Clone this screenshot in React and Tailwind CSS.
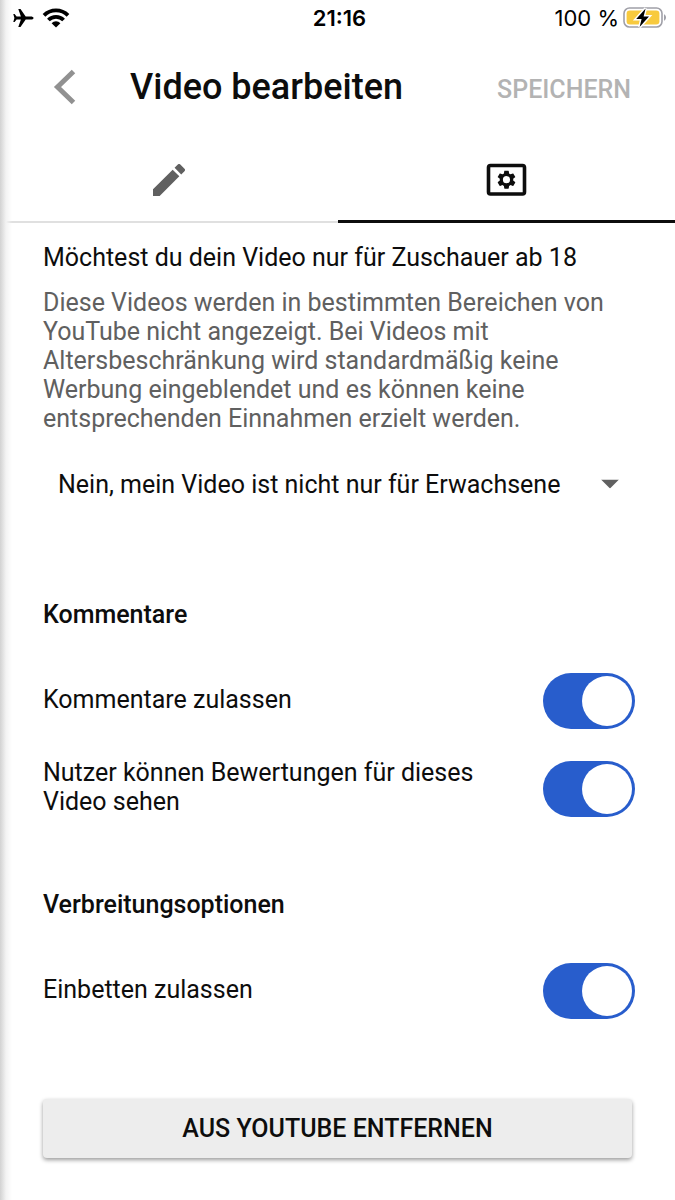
import { useState } from "react";

function StatusBar() {
  return (
    <div className="grid h-9 grid-cols-3 items-center pl-3 pr-2 font-['Inter','Liberation_Sans',sans-serif] text-[22px] leading-9 text-black">
      <div className="flex items-center gap-2">
        <svg viewBox="0 0 22 20" className="h-5 w-[22px]" fill="currentColor" aria-hidden="true">
          <path d="M21.5 10c0 1-1.2 1.5-2.8 1.5h-5L8.5 19H6.3l2.6-7.5H4.6l-2 2.6H1.3L2.4 10 1.3 5.9h1.3l2 2.6h4.3L6.3 1h2.2l5.2 7.5h5c1.6 0 2.8.5 2.8 1.5z" />
        </svg>
        <svg viewBox="0 0 28 20" className="h-5 w-7" fill="none" stroke="currentColor" strokeWidth="3.8" aria-hidden="true">
          <path d="M2 7.4a17 17 0 0 1 24 0" />
          <path d="M6.4 12a10.8 10.8 0 0 1 15.2 0" />
          <path d="M14 19.6l-4.4-4.4a6.2 6.2 0 0 1 8.8 0z" fill="currentColor" stroke="none" />
        </svg>
      </div>
      <div className="text-center font-semibold">21:16</div>
      <div className="flex items-center justify-end gap-1 whitespace-nowrap">
        <span>100 %</span>
        <svg viewBox="0 0 44 22" className="h-[22px] w-11" aria-hidden="true">
          <rect x="1" y="1" width="38" height="19" rx="5.5" fill="none" stroke="#a0a0a8" strokeWidth="1.6" />
          <rect x="3.6" y="3.6" width="32.8" height="13.8" rx="3.2" fill="#f8ca3e" />
          <path d="M41 7.2v6.6c1.2-.5 2-1.8 2-3.3s-.8-2.8-2-3.3z" fill="#a0a0a8" />
          <path d="M22.6 1.5L13.2 12h5.4l-2 8L26 9.4h-5.4z" fill="#000" stroke="#fff" strokeWidth="3" paintOrder="stroke" />
        </svg>
      </div>
    </div>
  );
}

function Header() {
  return (
    <header className="flex h-[102px] items-center pl-[43px] pr-11">
      <button type="button" aria-label="Zurück" className="flex h-12 w-[87px] items-center pl-2.5 text-[#919191]">
        <svg viewBox="0 0 24 36" className="h-9 w-6" fill="none" stroke="currentColor" strokeWidth="5" aria-hidden="true">
          <path d="M20.5 2.5L4.5 18l16 15.5" />
        </svg>
      </button>
      <h1 className="flex-1 text-4xl font-medium">Video bearbeiten</h1>
      <button type="button" disabled className="pt-1 text-[25px] font-medium text-[#b3b3b3]">
        SPEICHERN
      </button>
    </header>
  );
}

function Tabs({ active, onSelect }) {
  const tab = "flex h-[85px] items-center justify-center";
  const on = "border-b-3 border-[#0d0d0d]";
  const off = "border-b-2 border-[#e0e0e0]";
  return (
    <div role="tablist" className="grid grid-cols-2">
      <button
        type="button"
        role="tab"
        aria-label="Details"
        aria-selected={active === "details"}
        onClick={() => onSelect("details")}
        className={`${tab} ${active === "details" ? on : off} text-[#606060]`}
      >
        <svg viewBox="3 3 18 18" className="h-8 w-8" fill="currentColor" aria-hidden="true">
          <path d="M3 17.25V21h3.75L17.81 9.94l-3.75-3.75L3 17.25zM20.71 7.04a1 1 0 0 0 0-1.41l-2.34-2.34a1 1 0 0 0-1.41 0l-1.83 1.83 3.75 3.75 1.83-1.83z" />
        </svg>
      </button>
      <button
        type="button"
        role="tab"
        aria-label="Erweiterte Einstellungen"
        aria-selected={active === "advanced"}
        onClick={() => onSelect("advanced")}
        className={`${tab} ${active === "advanced" ? on : off} text-[#0d0d0d]`}
      >
        <svg viewBox="0 0 42 34" className="h-[34px] w-[42px]" aria-hidden="true">
          <rect x="3.5" y="3.5" width="36" height="28.5" rx="2" fill="none" stroke="currentColor" strokeWidth="3.6" />
          <g transform="translate(10.7 6.9) scale(.9)">
            <path
              fill="currentColor"
              fillRule="evenodd"
              d="M19.43 12.98c.04-.32.07-.64.07-.98s-.03-.66-.07-.98l2.11-1.65c.19-.15.24-.42.12-.64l-2-3.46c-.12-.22-.39-.3-.61-.22l-2.49 1c-.52-.4-1.08-.73-1.69-.98l-.38-2.65A.49.49 0 0 0 14 2h-4c-.25 0-.46.18-.49.42l-.38 2.65c-.61.25-1.17.59-1.69.98l-2.49-1c-.23-.09-.49 0-.61.22l-2 3.46c-.13.22-.07.49.12.64l2.11 1.65c-.04.32-.07.65-.07.98s.03.66.07.98l-2.11 1.65c-.19.15-.24.42-.12.64l2 3.46c.12.22.39.3.61.22l2.49-1c.52.4 1.08.73 1.69.98l.38 2.65c.03.24.24.42.49.42h4c.25 0 .46-.18.49-.42l.38-2.65c.61-.25 1.17-.59 1.69-.98l2.49 1c.23.09.49 0 .61-.22l2-3.46c.12-.22.07-.49-.12-.64l-2.11-1.65zM12 16a4 4 0 1 1 0-8 4 4 0 0 1 0 8z"
            />
          </g>
        </svg>
      </button>
    </div>
  );
}

function Toggle({ label }) {
  const [checked, setChecked] = useState(true);
  return (
    <label className="flex min-h-14 items-center justify-between">
      <span className="max-w-[460px] pb-1">{label}</span>
      <input
        type="checkbox"
        role="switch"
        checked={checked}
        onChange={(e) => setChecked(e.target.checked)}
        className="h-14 w-[92px] shrink-0 appearance-none rounded-full bg-gray-400 p-[3px] before:block before:size-[50px] before:rounded-full before:bg-white checked:bg-[#285dcc] checked:before:ml-9"
      />
    </label>
  );
}

export default function App() {
  const [tab, setTab] = useState("advanced");
  return (
    <div className="relative min-h-screen bg-white font-['Roboto',sans-serif] text-[25px] leading-[29px] text-[#0d0d0d]">
      <div className="pointer-events-none absolute inset-y-0 left-0 w-3 bg-linear-to-r from-[#d2d2d2] via-[#f3f3f3] to-transparent" />
      <StatusBar />
      <Header />
      <Tabs active={tab} onSelect={setTab} />

      <main className="pb-10 pl-[43px] pr-10 pt-5">
        <section>
          <h2 id="age">Möchtest du dein Video nur für Zuschauer ab 18</h2>
          <p className="mt-4 max-w-[580px] text-[#606060]">
            Diese Videos werden in bestimmten Bereichen von YouTube nicht angezeigt. Bei Videos mit
            Altersbeschränkung wird standardmäßig keine Werbung eingeblendet und es können keine
            entsprechenden Einnahmen erzielt werden.
          </p>
          <div className="relative mt-[23px]">
            <select aria-labelledby="age" className="h-14 w-full appearance-none bg-transparent pl-[15px] pr-14">
              <option>Nein, mein Video ist nicht nur für Erwachsene</option>
            </select>
            <svg
              viewBox="0 0 18 9"
              className="pointer-events-none absolute right-4 top-1/2 h-[9px] w-[18px] -translate-y-1/2"
              fill="#606060"
              aria-hidden="true"
            >
              <path d="M0 0h18L9 9z" />
            </svg>
          </div>
        </section>

        <section className="mt-[88px]">
          <h2 className="font-medium">Kommentare</h2>
          <div className="mt-11 flex flex-col gap-[29px]">
            <Toggle label="Kommentare zulassen" />
            <Toggle label="Nutzer können Bewertungen für dieses Video sehen" />
          </div>
        </section>

        <section className="mt-[70px]">
          <h2 className="font-medium">Verbreitungsoptionen</h2>
          <div className="mt-11">
            <Toggle label="Einbetten zulassen" />
          </div>
        </section>

        <div className="mt-20 pr-[3px]">
          <button type="button" className="h-[59px] w-full rounded-sm bg-[#ededed] font-medium shadow-[0_2px_4px_rgba(0,0,0,0.4)]">
            AUS YOUTUBE ENTFERNEN
          </button>
        </div>
      </main>
    </div>
  );
}
